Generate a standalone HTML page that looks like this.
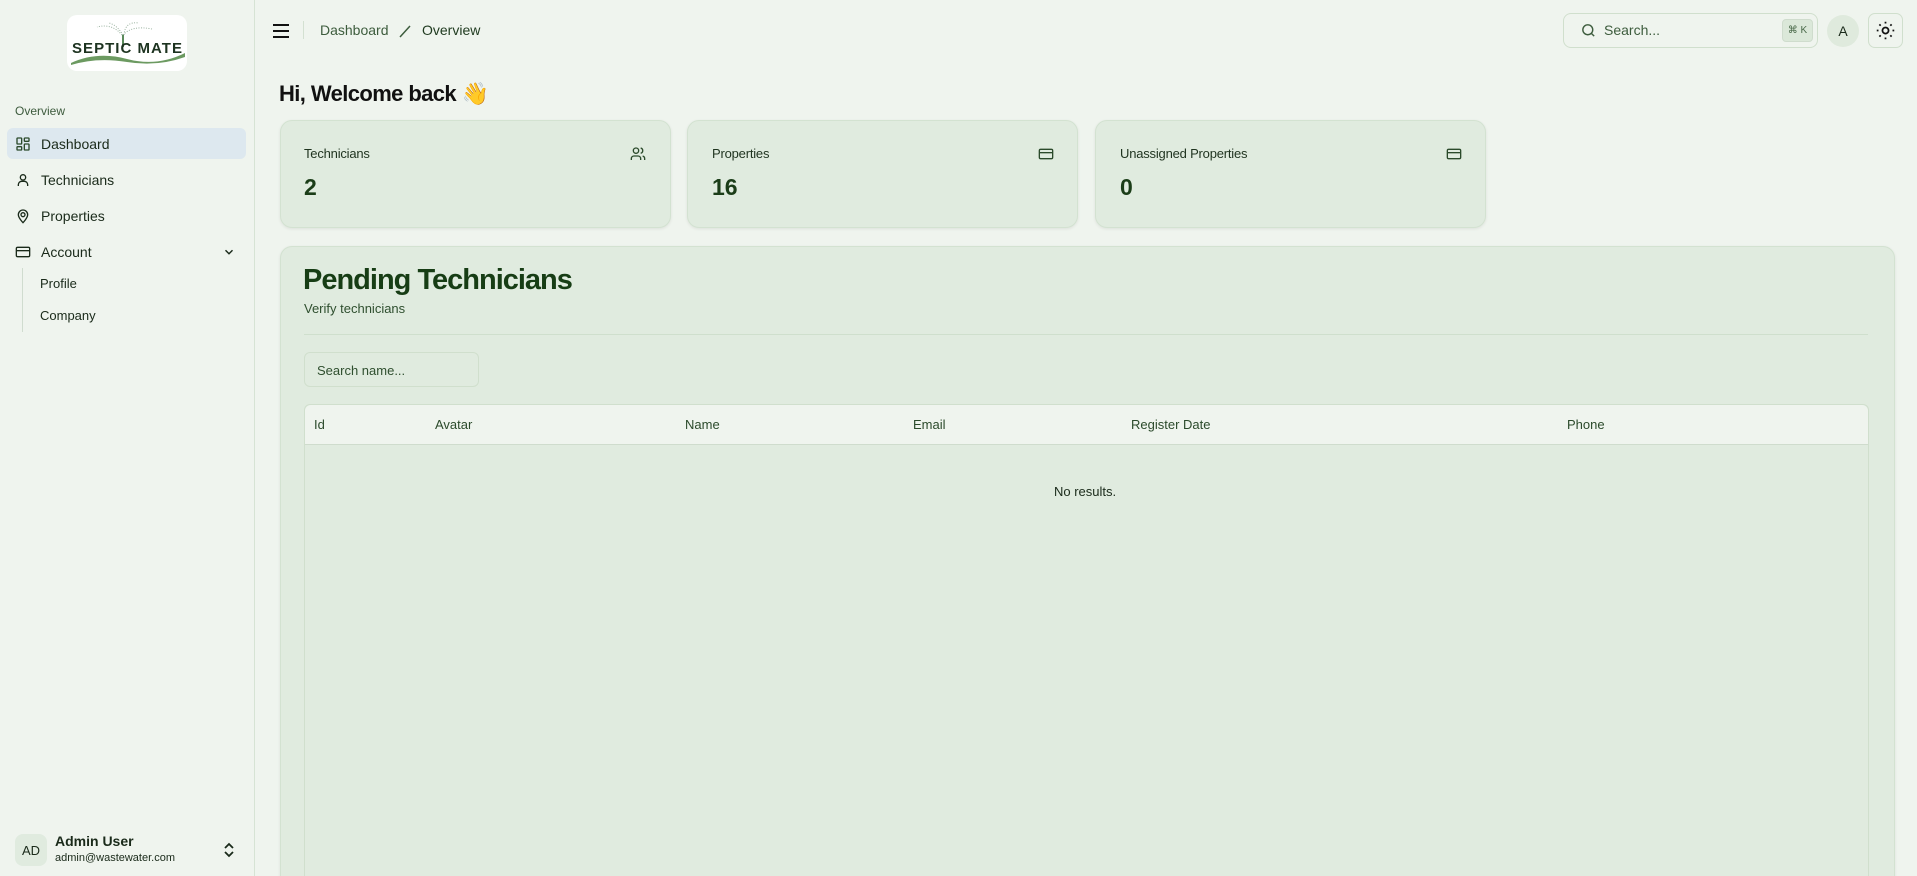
<!DOCTYPE html>
<html style="height:876px;overflow:hidden"><head><meta charset="utf-8"><style>
*{box-sizing:border-box;margin:0;padding:0}
body{width:1917px;height:876px;overflow:hidden;background:#eff4ee;font-family:"Liberation Sans",sans-serif;color:#1a2a1a;position:relative}
.abs{position:absolute}
.side{left:0;top:0;width:255px;height:876px;border-right:1px solid #d6e3d4;background:#eff4ee}
.logo{left:67px;top:15px;width:120px;height:56px;background:#fff;border-radius:10px;overflow:hidden}
.nav{left:7px;width:239px;height:31px;border-radius:6px;display:flex;align-items:center;padding-left:8px;font-size:14px;color:#1a2a1a}
.nav svg{margin-right:10px}
.card{background:#e0ebdf;border:1px solid #d3e2d1;border-radius:12px;box-shadow:0 1px 3px rgba(0,0,0,.08)}
.lbl{font-size:13px;color:#1f331f;letter-spacing:-0.2px}
.val{font-size:23px;font-weight:bold;color:#1b3d18}
.th{top:417px;font-size:13px;color:#2b4a2b}
</style></head><body>
<div class="abs side"></div>
<div class="abs logo">
<svg width="120" height="56" viewBox="0 0 120 56">
<g stroke="#9bb3a0" stroke-width="1" fill="none" stroke-dasharray="1 1.5"><path d="M55 20 Q45 8 30 12"/><path d="M57 20 Q58 6 72 8"/><path d="M56 20 Q65 10 85 14"/><path d="M56 20 Q50 10 42 8"/></g>
<path d="M56 20v12" stroke="#5a8a5a" stroke-width="2"/>
<text x="60" y="38" text-anchor="middle" font-family="Liberation Sans" font-weight="bold" font-size="15" fill="#1d3320" textLength="110">SEPTIC MATE</text>
<path d="M4 48 Q30 36 60 44 T118 38 L118 42 Q90 52 60 47 T4 50Z" fill="#6c9a61"/>
</svg></div>
<div class="abs" style="left:15px;top:104px;font-size:12px;color:#3c5a3c">Overview</div>
<div class="abs nav" style="top:128px;background:#dde8ef"><svg width="16" height="16" viewBox="0 0 24 24" fill="none" stroke="#2b4a2b" stroke-width="2"><rect x="3" y="3" width="7" height="9" rx="1"/><rect x="14" y="3" width="7" height="5" rx="1"/><rect x="14" y="12" width="7" height="9" rx="1"/><rect x="3" y="16" width="7" height="5" rx="1"/></svg>Dashboard</div>
<div class="abs nav" style="top:164px"><svg width="16" height="16" viewBox="0 0 24 24" fill="none" stroke="#1a2a1a" stroke-width="2"><circle cx="12" cy="8" r="4"/><path d="M5 21v-2a5 5 0 0 1 5-5h4a5 5 0 0 1 5 5v2"/></svg>Technicians</div>
<div class="abs nav" style="top:200px"><svg width="16" height="16" viewBox="0 0 24 24" fill="none" stroke="#1a2a1a" stroke-width="2"><path d="M12 22s7-7 7-12a7 7 0 0 0-14 0c0 5 7 12 7 12z"/><circle cx="12" cy="10" r="3"/></svg>Properties</div>
<div class="abs nav" style="top:236px"><svg width="16" height="16" viewBox="0 0 24 24" fill="none" stroke="#1a2a1a" stroke-width="2"><rect x="2" y="5" width="20" height="14" rx="2"/><path d="M2 10h20"/></svg>Account<svg style="position:absolute;right:10px;margin:0" width="14" height="14" viewBox="0 0 24 24" fill="none" stroke="#1a2a1a" stroke-width="2.5"><path d="M6 9l6 6 6-6"/></svg></div>
<div class="abs" style="left:22px;top:268px;width:1px;height:64px;background:#d0dccf"></div>
<div class="abs" style="left:40px;top:276px;font-size:13px">Profile</div>
<div class="abs" style="left:40px;top:308px;font-size:13px">Company</div>
<div class="abs" style="left:15px;top:834px;width:32px;height:32px;border-radius:8px;background:#e0ebdf;font-size:13px;display:flex;align-items:center;justify-content:center">AD</div>
<div class="abs" style="left:55px;top:833px;font-size:14px;font-weight:bold">Admin User</div>
<div class="abs" style="left:55px;top:852px;font-size:11px">admin@wastewater.com</div>
<svg class="abs" style="left:222px;top:841px" width="14" height="18" viewBox="0 0 14 18" fill="none" stroke="#1a2a1a" stroke-width="1.8"><path d="M3 7l4-4 4 4M3 11l4 4 4-4"/></svg>

<svg class="abs" style="left:271px;top:21px" width="20" height="20" viewBox="0 0 20 20" stroke="#111" stroke-width="2"><path d="M2 4h16M2 10h16M2 16h16"/></svg>
<div class="abs" style="left:303px;top:21px;width:1px;height:18px;background:#d3e0d1"></div>
<div class="abs" style="left:320px;top:22px;font-size:14px;color:#3d5c3d">Dashboard</div>
<svg class="abs" style="left:398px;top:24px" width="14" height="14" viewBox="0 0 14 14" stroke="#3d5c3d" stroke-width="1.5"><path d="M2 13L12 2"/></svg>
<div class="abs" style="left:422px;top:22px;font-size:14px;color:#1f3a1f">Overview</div>

<div class="abs" style="left:1563px;top:13px;width:255px;height:35px;border:1px solid #d0dfcd;border-radius:8px;background:#eff4ee"></div>
<svg class="abs" style="left:1580px;top:22px" width="17" height="17" viewBox="0 0 24 24" fill="none" stroke="#3d5c3d" stroke-width="2"><circle cx="11" cy="11" r="7"/><path d="M20 20l-4-4"/></svg>
<div class="abs" style="left:1604px;top:22px;font-size:14px;color:#3d5c3d">Search...</div>
<div class="abs" style="left:1782px;top:19px;width:31px;height:23px;border-radius:4px;background:#dbe8d9;border:1px solid #cfdccd;font-size:10px;color:#4a6a4a;text-align:center;line-height:21px">⌘ K</div>
<div class="abs" style="left:1827px;top:15px;width:32px;height:32px;border-radius:50%;background:#dfeadd;font-size:14px;text-align:center;line-height:32px">A</div>
<div class="abs" style="left:1868px;top:13px;width:35px;height:35px;border:1px solid #d0dfcd;border-radius:7px"></div>
<svg class="abs" style="left:1875px;top:20px" width="21" height="21" viewBox="0 0 24 24" fill="none" stroke="#111" stroke-width="2"><circle cx="12" cy="12" r="3.5"/><path d="M12 2v2M12 20v2M2 12h2M20 12h2M5 5l1.5 1.5M17.5 17.5L19 19M5 19l1.5-1.5M17.5 6.5L19 5"/></svg>

<div class="abs" style="left:279px;top:81px;font-size:22px;font-weight:bold;color:#111;letter-spacing:-0.6px">Hi, Welcome back 👋</div>

<div class="abs card" style="left:280px;top:120px;width:391px;height:108px"></div>
<div class="abs card" style="left:687px;top:120px;width:391px;height:108px"></div>
<div class="abs card" style="left:1095px;top:120px;width:391px;height:108px"></div>
<div class="abs lbl" style="left:304px;top:146px">Technicians</div>
<div class="abs lbl" style="left:712px;top:146px">Properties</div>
<div class="abs lbl" style="left:1120px;top:146px">Unassigned Properties</div>
<div class="abs val" style="left:304px;top:174px">2</div>
<div class="abs val" style="left:712px;top:174px">16</div>
<div class="abs val" style="left:1120px;top:174px">0</div>
<svg class="abs" style="left:630px;top:146px" width="16" height="16" viewBox="0 0 24 24" fill="none" stroke="#2b4a2b" stroke-width="2"><circle cx="9" cy="7" r="4"/><path d="M2 21v-2a4 4 0 0 1 4-4h6a4 4 0 0 1 4 4v2M16 3.1a4 4 0 0 1 0 7.8M22 21v-2a4 4 0 0 0-3-3.9"/></svg>
<svg class="abs" style="left:1038px;top:146px" width="16" height="16" viewBox="0 0 24 24" fill="none" stroke="#2b4a2b" stroke-width="2"><rect x="2" y="5" width="20" height="14" rx="2"/><path d="M2 10h20"/></svg>
<svg class="abs" style="left:1446px;top:146px" width="16" height="16" viewBox="0 0 24 24" fill="none" stroke="#2b4a2b" stroke-width="2"><rect x="2" y="5" width="20" height="14" rx="2"/><path d="M2 10h20"/></svg>

<div class="abs card" style="left:280px;top:246px;width:1615px;height:640px;border-bottom:none;border-radius:12px 12px 0 0"></div>
<div class="abs" style="left:303px;top:264px;font-size:29px;font-weight:bold;color:#173d15;letter-spacing:-1px">Pending Technicians</div>
<div class="abs" style="left:304px;top:301px;font-size:13px;color:#2f4f2f">Verify technicians</div>
<div class="abs" style="left:304px;top:334px;width:1564px;height:1px;background:#cfdfcd"></div>
<div class="abs" style="left:304px;top:352px;width:175px;height:35px;border:1px solid #d0dfcd;border-radius:6px;background:#e0ebdf;font-size:13px;color:#2f4f2f;padding:10px 0 0 12px">Search name...</div>
<div class="abs" style="left:304px;top:404px;width:1565px;height:490px;border:1px solid #d0dfcd;border-radius:6px"></div>
<div class="abs" style="left:305px;top:405px;width:1563px;height:40px;background:#eff4ee;border-bottom:1px solid #cfdccd;border-radius:6px 6px 0 0"></div>
<div class="abs th" style="left:314px">Id</div>
<div class="abs th" style="left:435px">Avatar</div>
<div class="abs th" style="left:685px">Name</div>
<div class="abs th" style="left:913px">Email</div>
<div class="abs th" style="left:1131px">Register Date</div>
<div class="abs th" style="left:1567px">Phone</div>
<div class="abs" style="left:1054px;top:484px;font-size:13px;color:#1a2a1a">No results.</div>
</body></html>
